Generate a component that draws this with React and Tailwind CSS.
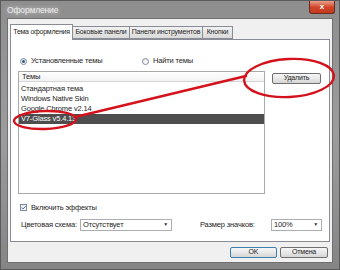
import { Check } from 'lucide-react';

function Radio({ checked, label }) {
  return (
    <div className="flex items-center gap-[4px]">
      <div className="w-[7px] h-[7px] rounded-full border border-[#7a8aa0] bg-gradient-to-b from-[#e6e6e6] to-white flex items-center justify-center">
        {checked && <div className="w-[3px] h-[3px] rounded-full bg-[#2a5a8a]" />}
      </div>
      <span>{label}</span>
    </div>
  );
}

function Combo({ value, width }) {
  return (
    <div className={`${width} h-[12px] border border-[#abadb3] bg-white flex items-center justify-between pl-[2px] pr-[3px]`}>
      <span>{value}</span>
      <span className="text-[5px] text-[#333]">▼</span>
    </div>
  );
}

function Button({ children, width, primary }) {
  return (
    <div
      className={`${width} h-[11px] rounded-[2px] border ${
        primary ? 'border-[#3c7fb1]' : 'border-[#707070]'
      } bg-gradient-to-b from-[#f6f6f6] via-[#e8e8e8] to-[#d6d6d6] flex items-center justify-center text-[7px]`}
    >
      {children}
    </div>
  );
}

function Tab({ children, width }) {
  return (
    <div
      className={`${width} h-[13px] bg-gradient-to-b from-[#f2f2f2] to-[#dadada] border border-l-0 border-[#898c95] flex items-center justify-center whitespace-nowrap overflow-hidden`}
    >
      {children}
    </div>
  );
}

export default function App() {
  const themes = ['Стандартная тема', 'Windows Native Skin', 'Google Chrome v2.14', 'V7-Glass v5.4.13'];

  return (
    <div className="relative w-[340px] h-[270px] overflow-hidden bg-gradient-to-b from-[#8e8e8e] via-[#9c9c9c] to-[#858585] border border-[#5a5a5a] font-['Liberation_Sans',sans-serif] text-[7.5px] tracking-[-0.15px] text-[#1e1e1e]">
      {/* Title bar */}
      <div className="h-[17px] flex justify-between">
        <div className="pl-[6px] pt-[3px] text-[8.5px] text-[#ececec] [text-shadow:0_0_5px_rgba(255,255,255,0.7)]">
          Оформление
        </div>
        <div className="mr-[4px] w-[26px] h-[13px] rounded-b-[3px] border border-[#6a2a20] border-t-0 bg-gradient-to-b from-[#e8a08c] via-[#d2452a] to-[#c23a1c] flex items-center justify-center text-[8px] font-bold text-white">
          x
        </div>
      </div>

      {/* Client area */}
      <div className="mx-[6px] h-[245px] bg-[#f0f0f0] border border-[#707070] flex flex-col">
        {/* Tabs */}
        <div className="mt-[4px] ml-[2px] flex items-end h-[16px] text-[7px]">
          <div className="relative z-10 -mb-px w-[63px] h-[16px] bg-white border border-[#898c95] border-b-0 flex items-center justify-center whitespace-nowrap tracking-[-0.25px]">
            Тема оформления
          </div>
          <Tab width="w-[57px]">Боковые панели</Tab>
          <Tab width="w-[73px]">Панели инструментов</Tab>
          <Tab width="w-[30px]">Кнопки</Tab>
        </div>

        {/* Panel */}
        <div className="mx-[2px] h-[203px] bg-white border border-[#898c95] pl-[7px] flex flex-col">
          <div className="mt-[16px] ml-[2px] h-[10px] flex items-center">
            <div className="w-[122px]">
              <Radio checked label="Установленные темы" />
            </div>
            <Radio label="Найти темы" />
          </div>

          <div className="mt-[5px] flex items-start">
            <div className="w-[247px] h-[123px] border border-[#a9a9a9] bg-white">
              <div className="h-[10px] border-b border-[#d5d5d5] bg-gradient-to-b from-white to-[#f2f2f2] pl-[3px] flex items-center">
                Темы
              </div>
              <div className="pt-[2px]">
                {themes.map((t, i) => (
                  <div
                    key={t}
                    className={`h-[10px] pl-[2px] flex items-center ${
                      i === themes.length - 1 ? 'bg-[#4e4e4e] text-white' : ''
                    }`}
                  >
                    {t}
                  </div>
                ))}
              </div>
            </div>
            <div className="ml-[7px] mt-[2px]">
              <Button width="w-[49px]">Удалить</Button>
            </div>
          </div>

          <div className="mt-[9px] ml-[2px] h-[9px] flex items-center gap-[4px]">
            <div className="w-[7px] h-[7px] border border-[#7a8aa0] bg-gradient-to-b from-[#e6e6e6] to-white flex items-center justify-center">
              <Check size={6} strokeWidth={4} className="text-[#2a4a7a]" />
            </div>
            <span>Включить эффекты</span>
          </div>

          <div className="mt-[7px] ml-[3px] flex items-center">
            <span className="w-[59px]">Цветовая схема:</span>
            <Combo value="Отсутствует" width="w-[92px]" />
            <span className="ml-[28px] w-[71px]">Размер значков:</span>
            <Combo value="100%" width="w-[51px]" />
          </div>
        </div>

        {/* Bottom buttons */}
        <div className="mt-[5px] mr-[4px] flex justify-end gap-[3px]">
          <Button width="w-[47px]" primary>
            OK
          </Button>
          <Button width="w-[48px]">Отмена</Button>
        </div>
      </div>

      {/* Red annotation overlay */}
      <svg className="absolute inset-0 pointer-events-none" width="340" height="270" viewBox="0 0 340 270">
        <g fill="none" stroke="#d4121c" strokeWidth="2.4" strokeLinecap="round">
          <ellipse cx="288" cy="77" rx="45" ry="19" transform="rotate(-3 288 77)" />
          <ellipse cx="44" cy="119" rx="31" ry="9" transform="rotate(-2 44 119)" />
          <path d="M74 116 L245 75" />
        </g>
      </svg>
    </div>
  );
}
